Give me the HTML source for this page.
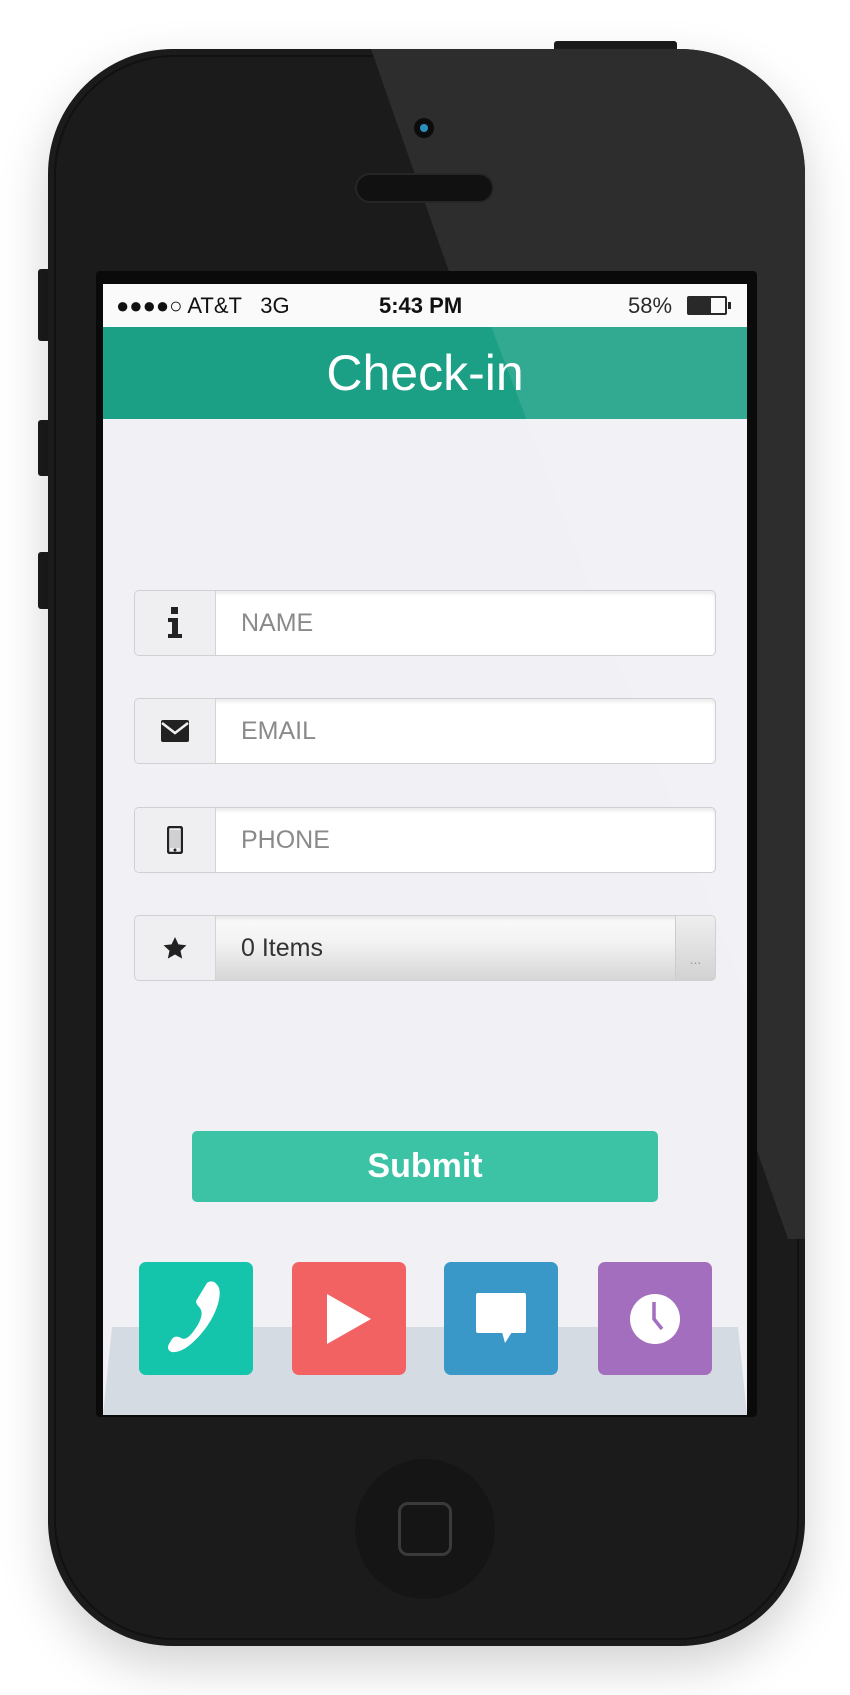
<!DOCTYPE html>
<html><head><meta charset="utf-8"><style>
*{margin:0;padding:0;box-sizing:border-box}
body{width:850px;height:1695px;background:#fff;position:relative;overflow:hidden;font-family:"Liberation Sans",sans-serif}
.abs{position:absolute}
.phone{left:48px;top:49px;width:757px;height:1597px;background:#1b1b1b;border-radius:125px;box-shadow:0 20px 50px rgba(0,0,0,.18);overflow:hidden}
.btn{background:#1b1b1b;border-radius:3px}
.row{position:absolute;left:134px;width:582px;height:66px;border:1px solid #cfcfd4;border-radius:5px;background:#fff;overflow:hidden;box-shadow:inset 0 3px 3px rgba(0,0,0,.08)}
.row .ic{position:absolute;left:0;top:0;width:81px;height:100%;background:#efeff1;border-right:1px solid #d4d4d8;display:flex;align-items:center;justify-content:center}
.row .tx{position:absolute;left:106px;top:0;line-height:64px;font-size:25px;color:#8a8a8a}
.tile{position:absolute;top:1262px;width:114px;height:113px;border-radius:7px;display:flex;align-items:center;justify-content:center}
</style></head><body>
<div class="abs btn" style="left:554px;top:41px;width:123px;height:14px"></div>
<div class="abs btn" style="left:38px;top:269px;width:14px;height:72px"></div>
<div class="abs btn" style="left:38px;top:420px;width:14px;height:56px"></div>
<div class="abs btn" style="left:38px;top:552px;width:14px;height:57px"></div>
<div class="abs phone">
  <div class="abs" style="left:6px;top:6px;right:6px;bottom:6px;border-radius:120px;border:2px solid #111"></div>
  <svg class="abs" style="left:0;top:0" width="757" height="1597"><polygon points="323,0 757,0 757,1190 740,1190" fill="#2d2d2d"/></svg>
  <div class="abs" style="left:366px;top:69px;width:20px;height:20px;border-radius:50%;background:#0c0c0c"></div>
  <div class="abs" style="left:372px;top:75px;width:8px;height:8px;border-radius:50%;background:#2a8fc0"></div>
  <div class="abs" style="left:307px;top:124px;width:139px;height:30px;border-radius:15px;background:#111;border:2px solid #262626"></div>
  <div class="abs" style="left:307px;top:1410px;width:140px;height:140px;border-radius:50%;background:#151515"></div>
  <div class="abs" style="left:350px;top:1453px;width:54px;height:54px;border-radius:10px;border:3px solid #3a3a3a"></div>
  <div class="abs" style="left:48px;top:222px;width:661px;height:1146px;background:#0a0a0a;border-radius:4px"></div>
</div>
<div class="abs" style="left:103px;top:284px;width:644px;height:1131px;background:#f0f0f5;overflow:hidden">
  <div class="abs" style="left:0;top:0;width:644px;height:43px;background:#fafafa;font-size:22px;color:#111">
    <span class="abs" style="left:13px;top:9px">●●●●○ AT&amp;T&nbsp;&nbsp; 3G</span>
    <span class="abs" style="left:276px;top:9px;font-weight:bold">5:43 PM</span>
    <span class="abs" style="left:525px;top:9px">58%</span>
    <div class="abs" style="left:584px;top:12px;width:40px;height:19px;border:2px solid #111;border-radius:2px"><div style="width:22px;height:100%;background:#111"></div></div>
    <div class="abs" style="left:625px;top:18px;width:3px;height:7px;background:#111"></div>
  </div>
  <div class="abs" style="left:0;top:43px;width:644px;height:92px;background:#1ba085;color:#fff;font-size:50px;text-align:center;line-height:92px;font-weight:300">Check-in</div>
  <div class="abs" style="left:0;top:1043px;width:644px;height:88px;background:#d5dbe2;clip-path:polygon(9px 0,635px 0,644px 100%,0 100%)"></div>
</div>
<svg class="abs" style="left:0;top:0;pointer-events:none" width="850" height="1695"><polygon points="475,284 747,284 747,1000" fill="rgba(255,255,255,0.1)"/></svg>

<div class="row" style="top:590px"><div class="ic"><svg width="16" height="32" viewBox="0 0 16 32"><rect x="4" y="0" width="7" height="7" fill="#222"/><path d="M1 11h10v16h4v4H1v-4h4V15H1z" fill="#222"/></svg></div><div class="tx">NAME</div></div>
<div class="row" style="top:698px"><div class="ic"><svg width="28" height="22" viewBox="0 0 28 22"><rect width="28" height="22" rx="2" fill="#222"/><path d="M1 3l13 10L27 3" stroke="#efeff1" stroke-width="2.5" fill="none"/></svg></div><div class="tx">EMAIL</div></div>
<div class="row" style="top:807px"><div class="ic"><svg width="16" height="28" viewBox="0 0 16 28"><rect x="1" y="1" width="14" height="26" rx="2" fill="none" stroke="#222" stroke-width="2.5"/><rect x="3" y="4" width="10" height="18" fill="#222" opacity=".15"/><circle cx="8" cy="24" r="1.5" fill="#222"/></svg></div><div class="tx">PHONE</div></div>
<div class="row" style="top:915px;background:linear-gradient(#fafafa,#f3f3f3 40%,#d6d6d6)"><div class="ic"><svg width="26" height="25" viewBox="0 0 24 24"><path d="M12 1l3.3 7 7.7.9-5.7 5.2 1.6 7.6L12 17.8 5.1 21.7l1.6-7.6L1 8.9 8.7 8z" fill="#222"/></svg></div><div class="tx" style="color:#333">0 Items</div><div class="abs" style="right:0;top:0;width:40px;height:100%;border-left:1px solid #ccc;background:linear-gradient(#eee,#d2d2d2);color:#999;font-size:14px;text-align:center;line-height:86px">...</div></div>

<div class="abs" style="left:192px;top:1131px;width:466px;height:71px;background:#3cc3a5;border-radius:5px;color:#fff;font-weight:bold;font-size:34px;text-align:center;line-height:71px">Submit</div>

<div class="tile" style="left:139px;background:#14c4ab"><svg width="58" height="84" viewBox="0 0 58 84"><path d="M40 6c5-4 10 0 12 5 3 10-4 30-18 46-9 10-17 17-26 18-5 1-9-3-6-8l3-5c2-3 6-3 9-1 4 2 7 0 12-6 7-9 10-17 8-22-1-3-5-5-5-9z" fill="#fff"/></svg></div>
<div class="tile" style="left:292px;background:#f36263"><svg width="44" height="50"><polygon points="0,0 44,25 0,50" fill="#fff"/></svg></div>
<div class="tile" style="left:444px;background:#3998c8"><svg width="50" height="52" viewBox="0 0 50 52"><rect width="50" height="40" rx="2" fill="#fff"/><polygon points="26,39 36,39 29,50" fill="#fff"/></svg></div>
<div class="tile" style="left:598px;background:#a36ebd"><svg width="52" height="52" viewBox="0 0 52 52"><circle cx="26" cy="26" r="25" fill="#fff"/><path d="M25 9v17l8 10" stroke="#a36ebd" stroke-width="3.5" fill="none"/></svg></div>
</body></html>
